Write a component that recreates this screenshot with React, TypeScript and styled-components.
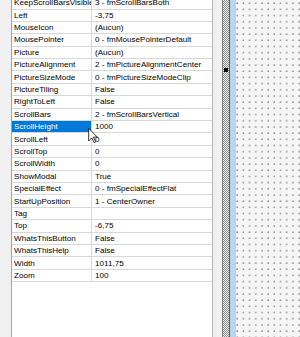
import React from "react";
import styled, { createGlobalStyle } from "styled-components";

const Global = createGlobalStyle`
  html, body { margin: 0; padding: 0; background: #f0f0f0; }
  body { overflow: hidden; }
`;

const Page = styled.div`
  position: relative;
  display: flex;
  width: 300px;
  height: 337px;
  overflow: hidden;
  background: #f0f0f0;
  font-family: "Liberation Sans", Arial, sans-serif;
  font-size: 8.1px;
  color: #000;
`;

const Gutter = styled.div`
  width: 11px;
  flex: none;
  background: #f0f0f0;
  border-right: 1px solid #a3a3a3;
`;

const Grid = styled.div`
  width: 200px;
  flex: none;
  background: #fff;
  border-right: 1px solid #b4b4b4;
  overflow: hidden;
`;

const RowList = styled.div`
  margin-top: -2.9px;
`;

const Row = styled.div`
  display: grid;
  grid-template-columns: 80px 1fr;
  height: 12.4px;
  box-sizing: border-box;
  border-bottom: 1px solid #d8d8d8;
`;

const NameCell = styled.div<{ $selected?: boolean }>`
  display: flex;
  align-items: center;
  padding-left: 2px;
  border-right: 1px solid #d8d8d8;
  background: ${(p) => (p.$selected ? "#0078d7" : "transparent")};
  color: ${(p) => (p.$selected ? "#fff" : "#000")};
  white-space: nowrap;
  overflow: hidden;
`;

const ValueCell = styled.div`
  display: flex;
  align-items: center;
  padding-left: 3px;
  white-space: nowrap;
  overflow: hidden;
`;

const Spacer = styled.div`
  width: 9px;
  flex: none;
  background: #f0f0f0;
`;

const Frame = styled.div`
  width: 6px;
  flex: none;
  border-left: 1px solid #7a7a7a;
  border-right: 1px solid #5a5a5a;
  background: repeating-conic-gradient(#8c8c8c 0% 25%, #ececec 0% 50%) 0 0 / 2px 2px;
  position: relative;
`;

const Handle = styled.div`
  position: absolute;
  left: 1px;
  top: 68px;
  width: 4px;
  height: 4px;
  background: #000;
`;

const BlueStrip = styled.div`
  width: 6px;
  flex: none;
  background: #bcd5ef;
`;

const Canvas = styled.div`
  flex: 1;
  background-color: #f5f5f5;
  background-image: radial-gradient(circle at 1px 1px, #8a8a8a 0.55px, transparent 0.9px);
  background-size: 6.2px 6.2px;
  background-position: 0.2px 2.2px;
`;

const Cursor = styled.svg`
  position: absolute;
  left: 88px;
  top: 128px;
  width: 10px;
  height: 15px;
`;

const rows: [string, string][] = [
  ["KeepScrollBarsVisible", "3 - fmScrollBarsBoth"],
  ["Left", "-3,75"],
  ["MouseIcon", "(Aucun)"],
  ["MousePointer", "0 - fmMousePointerDefault"],
  ["Picture", "(Aucun)"],
  ["PictureAlignment", "2 - fmPictureAlignmentCenter"],
  ["PictureSizeMode", "0 - fmPictureSizeModeClip"],
  ["PictureTiling", "False"],
  ["RightToLeft", "False"],
  ["ScrollBars", "2 - fmScrollBarsVertical"],
  ["ScrollHeight", "1000"],
  ["ScrollLeft", "0"],
  ["ScrollTop", "0"],
  ["ScrollWidth", "0"],
  ["ShowModal", "True"],
  ["SpecialEffect", "0 - fmSpecialEffectFlat"],
  ["StartUpPosition", "1 - CenterOwner"],
  ["Tag", ""],
  ["Top", "-6,75"],
  ["WhatsThisButton", "False"],
  ["WhatsThisHelp", "False"],
  ["Width", "1011,75"],
  ["Zoom", "100"],
];

export default function App() {
  return (
    <>
      <Global />
      <Page>
        <Gutter />
        <Grid>
          <RowList>
            {rows.map(([name, value]) => (
              <Row key={name}>
                <NameCell $selected={name === "ScrollHeight"}>{name}</NameCell>
                <ValueCell>{value}</ValueCell>
              </Row>
            ))}
          </RowList>
        </Grid>
        <Spacer />
        <Frame>
          <Handle />
        </Frame>
        <BlueStrip />
        <Canvas />
        <Cursor viewBox="0 0 12 19">
          <path
            d="M0.5 0.5 V16.5 L4.5 12.5 L7.5 18.5 L9.5 17.5 L6.5 11.5 H11.5 Z"
            fill="#fff"
            stroke="#000"
            strokeWidth="1"
            strokeLinejoin="miter"
          />
        </Cursor>
      </Page>
    </>
  );
}
